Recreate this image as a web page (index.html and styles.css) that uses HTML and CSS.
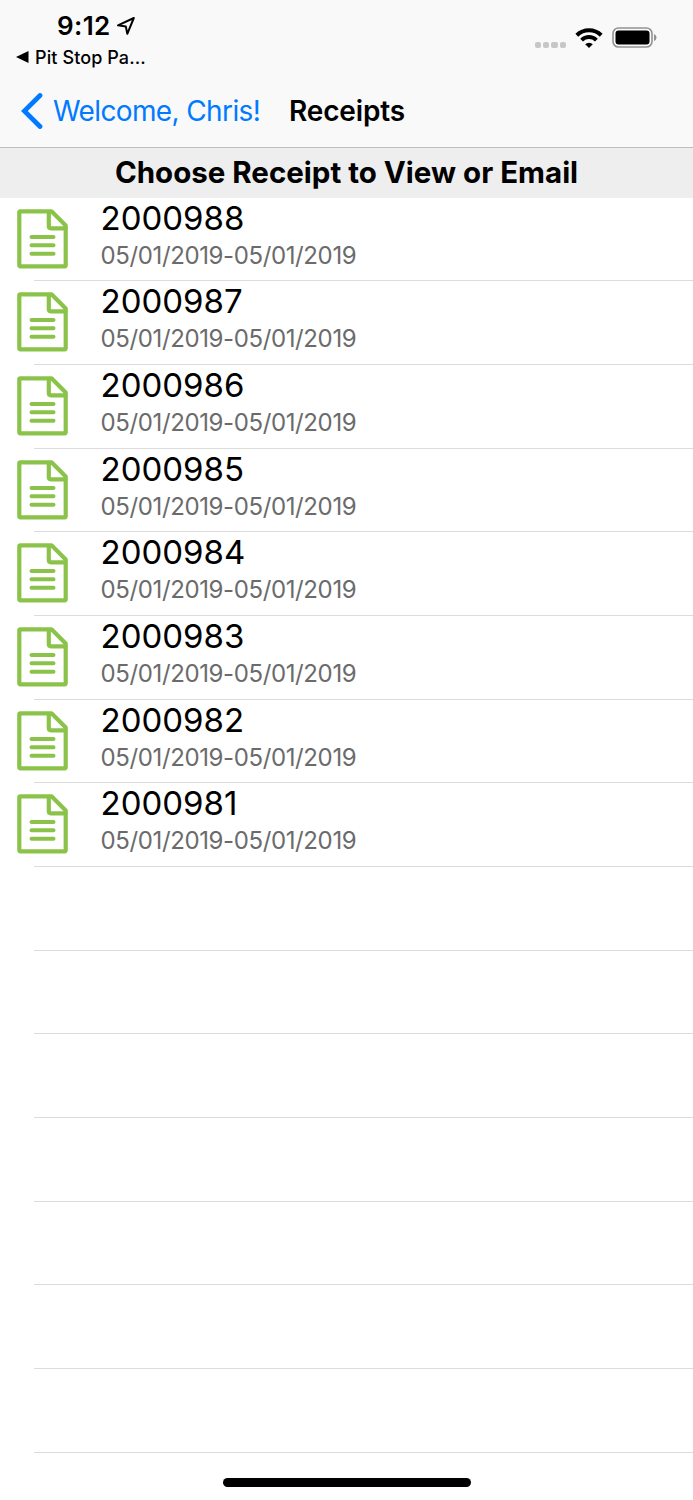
FILE: index.html
```html
<!DOCTYPE html>
<html lang="en">
<head>
    <meta charset="UTF-8">
    <meta name="viewport" content="width=device-width, initial-scale=1.0">
    <title>Receipts</title>
    <link rel="stylesheet" href="styles.css">
</head>
<body>
    <svg class="defs" aria-hidden="true">
        <symbol id="receipt" viewBox="0 0 52 60">
            <g fill="none" stroke="#8bc34a" stroke-width="4.2" stroke-linejoin="round" stroke-linecap="round">
                <path d="M3.300 2.300H34.500L48.700 16.500V56.300Q48.700 57.300 47.700 57.300H3.300Q2.300 57.300 2.300 56.300V3.300Q2.300 2.300 3.300 2.300Z"/>
                <path d="M31.800 3V17.300Q31.800 19.300 33.800 19.300H48.500"/>
            </g>
            <path d="M14.500 28H36.500M14.500 36.300H36.500M14.500 44.700H36.500" fill="none" stroke="#8bc34a" stroke-width="4" stroke-linecap="round"/>
        </symbol>
    </svg>

    <header class="header">
        <div class="status-bar">
            <div class="status-left">
                <div class="clock">
                    <span class="time">9:12</span>
                    <svg class="location" viewBox="0 0 20 20">
                        <path d="M17.800 2L2 9.300L9.800 10.400L11.300 17.800Z" fill="none" stroke="#000" stroke-width="2" stroke-linejoin="round"/>
                    </svg>
                </div>
                <div class="back-app">
                    <svg class="triangle" viewBox="0 0 13 12"><path d="M0 6L12.500 0V12Z"/></svg>
                    <span class="back-app-name">Pit Stop Pa...</span>
                </div>
            </div>
            <div class="status-right">
                <div class="signal"><i></i><i></i><i></i><i></i></div>
                <svg class="wifi" viewBox="0 0 28 20">
                    <g fill="none" stroke="#000" stroke-width="4">
                        <path d="M1.800 7.300A17.500 17.500 0 0 1 26.200 7.300"/>
                        <path d="M6.600 12.100A10.600 10.600 0 0 1 21.400 12.100"/>
                    </g>
                    <path d="M14 20L10.200 16.200A5.500 5.500 0 0 1 17.800 16.200Z"/>
                </svg>
                <svg class="battery" viewBox="0 0 45 21">
                    <rect x="1" y="1" width="39" height="19" rx="5.500" fill="none" stroke="#929292" stroke-width="1.600"/>
                    <rect x="3.500" y="3.500" width="34" height="14" rx="3"/>
                    <path d="M42 7Q44.500 8 44.500 10.500T42 14Z" fill="#929292"/>
                </svg>
            </div>
        </div>
        <nav class="nav-bar">
            <svg class="chevron" viewBox="0 0 22 36">
                <path d="M19 2.500L3.300 18L19 33.500" fill="none" stroke="#007aff" stroke-width="4.800" stroke-linecap="round"/>
            </svg>
            <span class="nav-back">Welcome, Chris!</span>
            <span class="nav-title">Receipts</span>
        </nav>
    </header>

    <h1 class="section-title"><span>Choose Receipt to View or Email</span></h1>

    <main class="list">
        <div class="row">
            <svg class="icon"><use href="#receipt"/></svg>
            <div class="info"><div class="number">2000988</div><div class="dates">05/01/2019-05/01/2019</div></div>
        </div>
        <div class="row">
            <svg class="icon"><use href="#receipt"/></svg>
            <div class="info"><div class="number">2000987</div><div class="dates">05/01/2019-05/01/2019</div></div>
        </div>
        <div class="row">
            <svg class="icon"><use href="#receipt"/></svg>
            <div class="info"><div class="number">2000986</div><div class="dates">05/01/2019-05/01/2019</div></div>
        </div>
        <div class="row">
            <svg class="icon"><use href="#receipt"/></svg>
            <div class="info"><div class="number">2000985</div><div class="dates">05/01/2019-05/01/2019</div></div>
        </div>
        <div class="row">
            <svg class="icon"><use href="#receipt"/></svg>
            <div class="info"><div class="number">2000984</div><div class="dates">05/01/2019-05/01/2019</div></div>
        </div>
        <div class="row">
            <svg class="icon"><use href="#receipt"/></svg>
            <div class="info"><div class="number">2000983</div><div class="dates">05/01/2019-05/01/2019</div></div>
        </div>
        <div class="row">
            <svg class="icon"><use href="#receipt"/></svg>
            <div class="info"><div class="number">2000982</div><div class="dates">05/01/2019-05/01/2019</div></div>
        </div>
        <div class="row">
            <svg class="icon"><use href="#receipt"/></svg>
            <div class="info"><div class="number">2000981</div><div class="dates">05/01/2019-05/01/2019</div></div>
        </div>
        <div class="row"></div>
        <div class="row"></div>
        <div class="row"></div>
        <div class="row"></div>
        <div class="row"></div>
        <div class="row"></div>
        <div class="row"></div>
    </main>

    <footer class="home-area"><div class="home-bar"></div></footer>
</body>
</html>
```
FILE: styles.css
```css
* {
    box-sizing: border-box;
}
body {
    margin: 0;
    height: 1500px;
    overflow: hidden;
    font-family: Inter, "Liberation Sans", sans-serif;
    background: #fff;
    color: #000;
    display: flex;
    flex-direction: column;
}
svg {
    display: block;
    flex: none;
}
.defs {
    position: absolute;
    width: 0;
    height: 0;
}
.header {
    height: 148px;
    background: #f9f9f9;
    border-bottom: 1px solid #bebebe;
    flex: none;
}

/* status bar */
.status-bar {
    height: 75px;
    display: flex;
    justify-content: space-between;
}
.status-left {
    padding: 9px 0 0 16px;
}
.clock {
    display: flex;
    align-items: center;
    height: 33px;
    padding-left: 41px;
    gap: 5px;
}
.time {
    font-size: 26px;
    font-weight: 600;
    letter-spacing: 0.4px;
    white-space: nowrap;
}
.location {
    width: 20px;
    height: 20px;
}
.back-app {
    display: flex;
    align-items: center;
    height: 30px;
    gap: 6px;
}
.triangle {
    width: 13px;
    height: 12px;
}
.back-app-name {
    font-size: 18px;
    font-weight: 500;
    letter-spacing: 0.1px;
    white-space: nowrap;
}
.status-right {
    display: flex;
    align-items: flex-start;
    padding: 27px 36px 0 0;
}
.signal {
    display: flex;
    gap: 2.200px;
    margin: 15px 9px 0 0;
}
.signal i {
    width: 6.200px;
    height: 6px;
    border-radius: 2px;
    background: #c7c7c7;
}
.wifi {
    width: 28px;
    height: 20px;
    margin: 1px 9px 0 0;
}
.battery {
    width: 45px;
    height: 21px;
}

/* navigation */
.nav-bar {
    display: flex;
    align-items: center;
    height: 72px;
    padding-left: 21px;
    white-space: nowrap;
}
.chevron {
    width: 22px;
    height: 36px;
}
.nav-back {
    width: 236px;
    padding-left: 10px;
    font-size: 28px;
    letter-spacing: -0.62px;
    color: #007aff;
}
.nav-title {
    margin-left: 10px;
    font-size: 28px;
    font-weight: 600;
    letter-spacing: -0.15px;
}
.section-title {
    height: 49.700px;
    margin: 0;
    background: #eee;
    text-align: center;
    font-size: 29.500px;
    line-height: 49px;
    font-weight: 700;
    white-space: nowrap;
    flex: none;
}

/* receipts */
.list {
    flex: none;
}
.row {
    position: relative;
    display: flex;
    height: 83.680px;
    padding: 11px 0 0 17px;
}
.row::after {
    content: "";
    position: absolute;
    left: 33.500px;
    right: 0;
    bottom: 0;
    height: 1px;
    background: #dcdcdc;
}
.icon {
    width: 52px;
    height: 60px;
}
.info {
    margin: -11px 0 0 31.500px;
    white-space: nowrap;
}
.number {
    font-size: 33px;
    line-height: 40px;
}
.dates {
    margin-top: 1px;
    font-size: 24px;
    line-height: 34px;
    letter-spacing: -0.38px;
    color: #6b6b6b;
}
.home-area {
    flex: 1;
    display: flex;
    justify-content: center;
    padding-top: 25px;
}
.home-bar {
    width: 248px;
    height: 9px;
    border-radius: 5px;
    background: #000;
}
```
